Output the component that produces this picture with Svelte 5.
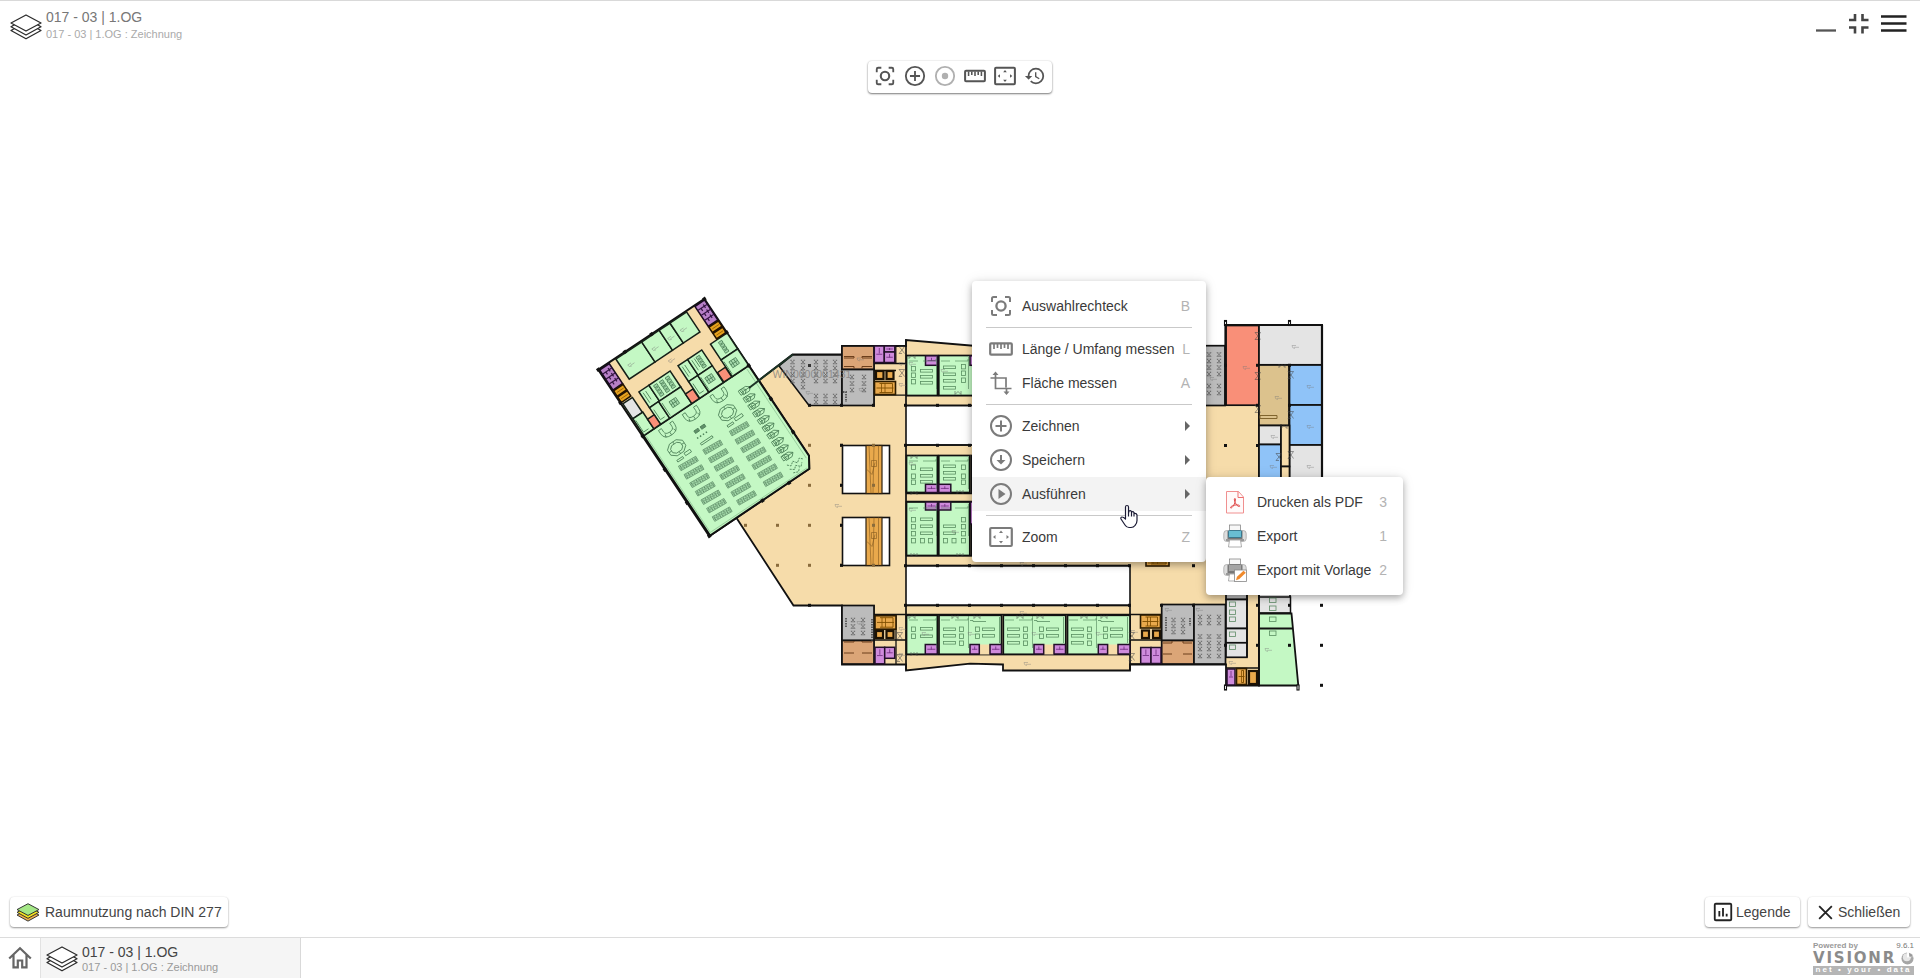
<script>
  const C = { tan: '#f6dcaa', green: '#c4f8c4', gray: '#bcbcbc', light: '#e4e4e4', blue: '#8fc3f8', red: '#f98f78', brown: '#dba577', orange: '#e9a94c', purple: '#cf8bdc', ochre: '#dcc28d', amber: '#e6a21f' };

  // Upright rooms: x, y, width, height, colour
  const rooms = [
    [842, 346, 32, 23.5, C.brown], [842, 369.5, 32, 36, C.gray],
    [842, 605.5, 32, 35, C.gray], [842, 640.5, 32, 23.5, C.brown],
    [906.5, 355.5, 31, 40, C.green], [938.8, 355.5, 40, 40, C.green],
    [906.5, 455.5, 31, 37, C.green], [938.8, 455.5, 31, 37, C.green], [971.3, 455.5, 20, 37, C.green],
    [906.5, 502, 31, 53.5, C.green], [938.8, 502, 31, 53.5, C.green], [971.3, 502, 20, 53.5, C.green],
    [906.5, 615.3, 31, 39, C.green], [939, 615.3, 62.5, 39, C.green], [1003.3, 615.3, 62.5, 39, C.green], [1067.5, 615.3, 62.5, 39, C.green],
    [1161.7, 604.5, 32.3, 36, C.gray], [1161.7, 640.5, 32.3, 23.5, C.brown], [1194, 604.5, 31.5, 59.5, C.gray],
    [1200, 345.7, 25, 59.8, C.gray],
    [1226, 325.5, 33, 79.7, C.red], [1259, 325, 63, 39.8, C.light],
    [1259, 365, 30, 60.5, C.ochre], [1289.5, 365, 32.5, 40, C.blue], [1289.5, 405, 32.5, 40, C.blue],
    [1289.5, 445, 32.5, 50, C.light], [1259, 425.5, 22, 19, C.light], [1259, 444.5, 22, 45, C.blue],
    [1281, 425.5, 8.5, 41, C.tan], [1281, 466.5, 8.5, 30, C.tan],
    [1226, 585, 21, 14.5, C.gray], [1226, 599.5, 21, 29, C.light], [1226, 628.5, 21, 14.3, C.light], [1226, 642.8, 21, 14.5, C.light]
  ];
  const purple = [
    [874.3, 346, 10, 16.5], [884.3, 346, 10.5, 6], [884.3, 352, 10.5, 10.5],
    [925.5, 355.8, 12, 9.5], [970, 355.8, 10, 9.5],
    [925.5, 484.3, 12, 8.2], [938.8, 484.3, 12, 8.2], [925.5, 502, 12, 8], [938.8, 502, 12, 8], [970.3, 502, 6, 22],
    [925.3, 644.5, 12, 9.5], [970, 644.5, 9.3, 9.5], [990, 644.5, 11.5, 9.5], [1034, 644.5, 9.7, 9.5], [1054, 644.5, 11.5, 9.5], [1098.3, 644.5, 9.3, 9.5], [1118, 644.5, 12, 9.5],
    [875, 647.3, 9.7, 16.5], [884.7, 647.3, 10, 11],
    [1140.7, 647.5, 10.3, 16], [1151, 647.5, 10, 16],
    [1227, 669, 8, 16]
  ];
  const lifts = [[876, 371, 7.5, 8], [886.5, 371, 7, 8], [876, 631, 7, 7], [886.5, 631, 7, 7], [1142, 630.5, 7, 7.5], [1153, 630.5, 7, 7.5], [1249, 671, 8, 13]];
  const stairs = [[874.5, 381.5, 21, 13], [875, 615.7, 21, 13.5], [1140.5, 615, 20, 13], [1236.5, 668.5, 10, 16], [1146, 560, 23, 6]];

  const range = (n) => Array.from({ length: n }, (_, i) => i);

  // Columns of the main hall
  const posts = [];
  for (const y of [445.3, 485.3]) for (const x of [809.5, 841.5, 873.5]) posts.push([x, y]);
  for (const y of [525.3, 565.3]) for (const x of [745.5, 777.5, 809.5, 841.5, 873.5]) if (!(y > 560 && x < 760)) posts.push([x, y]);
  const darkPosts = [[809.5, 405.3], [841.5, 405.3], [873.5, 405.3], [809.5, 605.3], [841.5, 445.3], [841.5, 485.3], [841.5, 525.3], [841.5, 565.3], [1225.5, 445.5], [1257.5, 445.5], [1257.5, 405.3], [1257.5, 365.3], [1225.5, 365.3], [1289.5, 365.3], [1289.5, 405.3], [1321.5, 605.3], [1321.5, 645.3], [1321.5, 685.3], [1289.5, 645.3], [1257.5, 645.3], [1257.5, 605.3], [1289.5, 605.3], [1161.5, 605.3], [1193.5, 605.3], [1225.5, 645.3], [1193.5, 565.7]];
  for (const x of [905.5, 937.5, 969.5]) for (const y of [405.3, 445.3, 565.7]) darkPosts.push([x, y]);
  for (const x of [1001.5, 1033.5, 1065.5, 1097.5, 1129.5]) darkPosts.push([x, 565.7]);
  for (const x of [905.5, 937.5, 969.5, 1001.5, 1033.5, 1065.5, 1097.5, 1129.5]) darkPosts.push([x, 605.3]);

  // Chair groups
  const seats = [];
  const addSeats = (xs, ys) => { for (const x of xs) for (const y of ys) seats.push([x, y]); };
  addSeats([792.5, 803], [362, 368, 374.5, 381]);
  addSeats([816, 825.5, 835], [362, 368, 374.5, 381, 396, 402]);
  seats.push([803, 387]);
  addSeats([852, 864], [377, 383.5, 390]);
  addSeats([853, 863], [620, 626.5, 633]);
  addSeats([1173.5, 1183], [620, 626, 632]);
  addSeats([1200, 1209, 1219], [617, 623, 636.5, 643, 649, 656]);
  addSeats([1209, 1219], [354.5, 361, 367.5, 374, 386, 393]);

  // Desks and tables: x, y, width, height
  const desks = [];
  const wide = (x, ys) => ys.forEach((y) => desks.push([x, y, 12, 2.6]));
  const small = (x, ys) => ys.forEach((y) => desks.push([x, y, 4, 4.4]));
  wide(920.5, [369.5, 375.5, 381.5]); small(911.5, [366.5, 373, 379.5]);
  wide(943.5, [366, 373, 379.5, 386.5]); small(961.5, [364.5, 371, 378]);
  wide(920.5, [468, 474.5, 480.5]); small(911.5, [465, 474, 480]);
  wide(943.5, [465, 471.5, 477.5]); small(961.5, [465, 474, 480]);
  wide(920.5, [518, 525, 532]); small(911.5, [517.5, 524.5, 531.5, 538.5]); small(920.5, [538.5]); small(928.5, [538.5]);
  wide(943.5, [525, 532]); small(961.5, [517.5, 524.5, 531.5, 538.5]); small(943.5, [538.5]); small(952, [538.5]);
  wide(920.5, [627.5, 635]); small(911.5, [627, 634]);
  for (const bx of [939, 1003, 1067]) {
    wide(bx + 4.5, [628, 634.5, 641.5]); small(bx + 20.5, [627, 634, 641]);
    small(bx + 36.5, [627, 634]); wide(bx + 43.5, [628, 634.5]);
  }
  for (const y of [602, 610, 617, 632, 645]) desks.push([1229.5, y, 6, 4.5]);
  for (const y of [598, 606, 617, 631]) desks.push([1269.5, y, 6.5, 4.5]);

  const doors = [[912, 355], [912, 615], [955, 615], [977, 615], [1020, 615], [1040, 615], [1084, 615], [1104, 615], [914, 455], [914, 553], [960, 553], [958, 391], [960, 490], [914, 491], [914, 652], [1282, 364], [1284, 425]];
  const sideDoors = [[1258, 336], [1258, 376], [1258, 409], [1291, 375], [1291, 415], [1291, 455], [1279, 457], [902, 350], [902, 373], [900, 636], [900, 658], [1132, 636], [1132, 657]];
  const labels = [[860, 359.5], [862, 390], [809, 393], [902, 364], [902, 385], [912, 364], [944, 371], [912, 464], [912, 510], [955, 532], [838, 506], [1246, 368], [1295, 347], [1278, 398], [1310, 387], [1310, 427], [1310, 467], [1274, 437], [1273, 467], [971, 634], [1035, 634], [1099, 634], [925, 634], [860, 623], [1023, 613], [1027, 664], [1023, 564], [1168, 610], [1199, 610], [1232, 663], [1268, 650], [1213, 379], [902, 629], [902, 655], [1134, 632]];

  // Rotated library wing, in its own axes
  const wing = [
    [20.5, 1, 31, 24, C.green], [51.5, 1, 21, 24, C.green], [72.5, 1, 13, 24, C.green], [85.5, 1, 20, 24, C.green],
    [1.5, 42, 11.5, 18, C.light], [1.5, 60, 12, 20, C.green],
    [21.5, 41, 12, 19, C.green], [33.5, 41, 25.5, 19, C.green], [21.5, 60, 11, 20, C.green], [32.5, 60, 26.5, 20, C.green],
    [68.5, 41, 11.5, 19, C.green], [80, 41, 17, 19, C.green], [68.5, 60, 11, 20, C.green], [79.5, 60, 17.5, 20, C.green],
    [107.5, 41, 20, 19, C.green], [107.5, 60, 20, 20, C.green],
    [13.5, 68.5, 8, 11.5, C.red], [59, 68.5, 9, 11.5, C.red], [97.5, 68.5, 9.5, 11.5, C.red]
  ];
  const shelves = [];
  [[22.9, 128], [52.2, 128], [84.6, 127.3]].forEach(([x, y]) => range(7).forEach((i) => shelves.push([x, y + i * 10.15])));

  const menu = [
    { icon: 'select', label: 'Auswahlrechteck', key: 'B' }, null,
    { icon: 'ruler', label: 'Länge / Umfang messen', key: 'L' },
    { icon: 'area', label: 'Fläche messen', key: 'A' }, null,
    { icon: 'plus', label: 'Zeichnen', sub: true },
    { icon: 'down', label: 'Speichern', sub: true },
    { icon: 'play', label: 'Ausführen', sub: true, active: true }, null,
    { icon: 'zoom', label: 'Zoom', key: 'Z' }
  ];
  const submenu = [
    { icon: 'pdf', label: 'Drucken als PDF', key: '3' },
    { icon: 'printer', label: 'Export', key: '1' },
    { icon: 'template', label: 'Export mit Vorlage', key: '2' }
  ];
  const tools = ['select', 'plus', 'dot', 'ruler', 'zoom', 'history'];
</script>

{#snippet icon(name)}
  <svg class="icon {name}" viewBox="0 0 24 24" fill="none" stroke="currentColor" stroke-width="2">
    {#if name === 'select'}
      <circle cx="12" cy="12" r="4.600" stroke-width="2.300" />
      <path d="M3 8V4.500Q3 3 4.500 3H8M16 3h3.500Q21 3 21 4.500V8M21 16v3.500q0 1.500-1.500 1.500H16M8 21H4.500Q3 21 3 19.500V16" />
    {:else if name === 'plus'}
      <circle cx="12" cy="12" r="10" /><path d="M12 6.500v11M6.500 12h11" />
    {:else if name === 'down'}
      <circle cx="12" cy="12" r="10" /><path d="M12 7v6" /><path d="M7.500 12h9L12 16.500z" fill="currentColor" stroke="none" />
    {:else if name === 'play'}
      <circle cx="12" cy="12" r="10" /><path d="M9.500 7v10l7-5z" fill="currentColor" stroke="none" />
    {:else if name === 'dot'}
      <circle cx="12" cy="12" r="10" /><circle cx="12" cy="12" r="3.500" fill="currentColor" stroke="none" />
    {:else if name === 'ruler'}
      <rect x="1.200" y="6.300" width="21.600" height="11.400" rx="1" stroke-width="2.200" /><path d="M5 7v5M8.500 7v4M12 7v5M15.500 7v4M19 7v5" stroke-width="1.700" />
    {:else if name === 'zoom'}
      <rect x="1.200" y="3" width="21.600" height="18" rx="1" stroke-width="2.200" /><path d="M12 5.500l-2 2.500h4zM12 18.500l-2-2.500h4zM4 12l2.500-2v4zM20 12l-2.500-2v4z" fill="currentColor" stroke="none" />
    {:else if name === 'history'}
      <path d="M13 3a9 9 0 0 0-9 9H1l3.890 3.890.070.140L9 12H6c0-3.870 3.130-7 7-7s7 3.130 7 7-3.130 7-7 7c-1.930 0-3.680-.790-4.940-2.060l-1.420 1.420A8.950 8.950 0 0 0 13 21a9 9 0 0 0 0-18zm-1 5v5l4.280 2.540.720-1.210-3.500-2.080V8H12z" fill="currentColor" stroke="none" />
    {:else if name === 'area'}
      <path d="M1.500 7H17v9.500M6.500 3v14.500h16M17.500 17.500V21" stroke-width="1.700" /><path d="M3.500 4h6l-3-3.500zM14.500 20.500h6l-3 3.500z" fill="currentColor" stroke="none" />
    {:else if name === 'pdf'}
      <path d="M3.500 1.500h12l5 5.500v16h-17z" fill="#fffafa" stroke="#f09090" stroke-width="1" /><path d="M15 1.500V7.500h5.500" stroke="#ee7070" stroke-width="1" />
      <path d="M12 8.500c-1 0-.8 2 .2 4 1 2.300 2.600 4 4 4 1.200 0 .8-1.600-2-1.600-3 0-6.700 1.300-6.700 2.600 0 1.300 2 .2 3.300-2.400C12 13 13 8.500 12 8.500z" stroke="#e04848" stroke-width="1" />
    {:else if name === 'printer' || name === 'template'}
      <rect x="6.500" y="1" width="11" height="8" fill="#f7f7f7" stroke="#888" stroke-width=".8" />
      <rect x=".8" y="6.500" width="22.400" height="11" rx="3" fill="#dedede" stroke="#aaa" stroke-width=".8" />
      <path d="M4.500 7h15v8h-15z" fill="#777" stroke="none" />
      <rect x="5.500" y="6.500" width="13" height="7" rx="1" fill={name === 'printer' ? '#69bdd2' : '#a5a5a5'} stroke={name === 'printer' ? '#34738a' : '#777'} stroke-width=".9" />
      <path d="M3 15h18v2H3z" fill="#999" stroke="none" /><path d="M6.500 16h11l1 7h-13z" fill="#fff" stroke="#999" stroke-width=".8" />
      {#if name === 'template'}
        <rect x="11.500" y="12" width="12" height="11.500" fill="#fff" stroke="#888" stroke-width=".8" /><path d="M13 22.200l1-3.500 6.500-6 2.300 2-6.500 6.300z" fill="#f08a2c" stroke="none" />
      {/if}
    {:else if name === 'chart'}
      <rect x="3" y="3" width="18" height="18" rx="1.200" /><path d="M8 17v-6M12 17V7.500M16 17v-3" />
    {:else if name === 'close'}
      <path d="M4 4l16 16M20 4L4 20" stroke-width="2.300" />
    {:else if name === 'home'}
      <path d="M1.200 12.500L12 2.300l10.800 10.200M5.500 9v12.300h4.300v-6.800h4.400v6.800h4.300V9" stroke-width="2.200" />
    {/if}
  </svg>
{/snippet}

{#snippet layers(fills)}
  <svg class="layers" viewBox="0 0 32 26" stroke="#2c2c2c" stroke-width="1.300" stroke-linejoin="round">
    <path d="M1 16.500L16 8l15 8.500L16 24.800z" fill={fills[2]} />
    <path d="M1 12.800L16 4l15 8.800L16 21z" fill={fills[1]} />
    <path d="M1 9L16 1l15 8L16 17z" fill={fills[0]} />
  </svg>
{/snippet}

{#snippet entry(item)}
  {#if item}
    <li class="entry" class:active={item.active}>
      <span class="glyph">{@render icon(item.icon)}</span>
      <span class="label">{item.label}</span>
      {#if item.sub}<i class="arrow"></i>{:else}<kbd>{item.key}</kbd>{/if}
    </li>
  {:else}
    <li class="rule"></li>
  {/if}
{/snippet}

<div class="page">
  <main>
    <svg class="plan" viewBox="0 0 1920 978">
      <defs>
        <g id="seat" stroke="#555" stroke-opacity=".75" stroke-width=".8" fill="none"><path d="M-1.800-1.800L1.800 1.800M1.800-1.800L-1.800 1.800M-2.200-1.800h1.600M.6-1.800h1.600M-2.200 1.800h4.400" /></g>
        <g id="shelf"><rect x="-10" y="-2.600" width="20" height="5.200" fill="#a2d8a8" stroke="#628f6a" stroke-width=".7" /><path d="M-10 0H10" stroke="#5f8c67" stroke-width=".6" /><path d="M-9-1.300H10M-9 1.400H10" stroke="#5f8c67" stroke-width="1.200" stroke-dasharray="1.200 1.600" /></g>
        <g id="mark" stroke="#777" stroke-opacity=".55" stroke-width=".7" fill="none"><path d="M-3-1.500H1M-3-1.500Q-3 1.500 0 1.500M-1 .3H4" /></g>
      </defs>

      <path d="M749 388L792.500 354.500H842V346H906V340L1000 348H1225.500V405H1259V685.500H1226V664.500H1130V670.500H1003V664.500L970 663.700 906 670.500V664.500H842V605.500H793.500L730 508z" fill={C.tan} stroke="#111" stroke-width="1.800" />
      <g fill="#fff" stroke="#111" stroke-width="1.600">
        <rect x="906" y="405.500" width="224" height="39.500" /><rect x="906" y="565.700" width="224" height="39.600" />
        <rect x="842.500" y="445.500" width="47" height="48" /><rect x="842.500" y="517.500" width="47" height="48" />
      </g>
      {#each [445.5, 517.5] as y}
        <rect x="866" {y} width="16" height="48" fill={C.orange} stroke="#2c2010" stroke-width="1.200" />
        <path d="M869 {y}l2 48M874 {y}l-1 48M878.500 {y}v48M867 {y + 24}l5 5 3-12M871.500 {y + 15}h5v6h-5z" fill="none" stroke="#845b20" stroke-opacity=".75" stroke-width=".8" />
      {/each}
      <path d="M779 366L792.500 355H842V405.500H809z" fill={C.gray} stroke="#111" stroke-width="1.600" />

      <g fill="none" stroke="#111" stroke-width="1.700">
        <path d="M906 339.500V405M906 445V565M906 605V670M906 395.500h80M906 405.500h80M906 445h80M906 493.500h80M906 501.500h80M906 555.700h80M906 565.700h224M906 605.300h224M906 614.500h224M906 654.500h224M1130 605v65" />
        <path d="M874 346v59M874 605v59M895.800 346v17M874 363.500h32M874 395.200h32M874 614.500h32M874 640h32M896 615v49M874 370.500h22M1130 614.500h31M1130 640h31M1130 664h32" stroke-width="1.300" />
      </g>

      {#each rooms as [x, y, width, height, fill]}
        <rect {x} {y} {width} {height} {fill} stroke="#111" stroke-width="1.700" />
      {/each}
      <path d="M1259 597h31.500V613H1259z" fill={C.light} stroke="#111" stroke-width="1.500" />
      <path d="M1259 613.500h32.500l6.800 72H1259zM1259 628.500h33.500" fill={C.green} stroke="#111" stroke-width="1.800" />
      <path d="M1259 495V686M1247 585v72M1290 585v12M1226 668h33" fill="none" stroke="#111" stroke-width="1.600" />
      <g fill="#fff" stroke="#111" stroke-width="1.100">
        <rect x="1224.500" y="320.500" width="2" height="5" /><rect x="1288.500" y="320.500" width="2" height="5" /><rect x="1224.500" y="685" width="2" height="5" /><rect x="1297" y="685" width="2" height="5" />
      </g>
      <path d="M1225.500 325v80M1224.500 325H1323M1322 325V490" stroke="#111" stroke-width="2.200" fill="none" />

      {#each [[979.5, 990], [1043.8, 1054], [1107.8, 1118]] as [a, b]}
        <rect x={a} y="644.500" width={b - a} height="10" fill={C.tan} />
      {/each}
      {#each purple as [x, y, width, height]}
        <rect {x} {y} {width} {height} fill={C.purple} stroke="#23102a" stroke-width="1.500" />
        <path d="M{x + 2} {y + height / 2}h{width - 4}M{x + width / 2} {y + 2}v{height / 3}" stroke="#6d2b7c" stroke-width=".8" />
      {/each}
      {#each stairs as [x, y, width, height]}
        <rect {x} {y} {width} {height} fill={C.orange} stroke="#2c1c00" stroke-width="1.600" />
        <path d="M{x + 2} {y + height / 2}h{width - 4}M{x + 5} {y + 2}h{width - 8}v{height - 4}h{8 - width}" fill="none" stroke="#7d4e00" stroke-width=".9" />
        <path d="M{x + 7} {y + 2}v{height - 4}M{x + width / 2} {y + 2}v{height - 4}" stroke="#7d4e00" stroke-width=".8" />
      {/each}
      {#each lifts as [x, y, width, height]}
        <rect {x} {y} {width} {height} fill={C.orange} stroke="#1c1204" stroke-width="2.200" />
      {/each}

      <g stroke="#6c3f1c" stroke-width="1" fill="none">
        <path d="M844 356.500h10v1.500h-10M872 356.500h-10v1.500h10M844 366.500h10v2M872 366.500h-10v2M844 642h10v-1M872 642h-10v-1M844 653h10M872 653h-10M1163 643h9v-2M1192 643h-9v-2M1163 654h9M1192 654h-9" />
        <path d="M1260 415.500h17v3h-17z" stroke="#80642e" />
        <path d="M843 392h3v10M872 619v22M846 618v10M1166 617v14M1190 618v8" stroke="#555" stroke-dasharray="1.500 1" stroke-width="1.800" />
      </g>

      {#each seats as [x, y]}<use href="#seat" {x} {y} />{/each}
      <g fill="none" stroke="#467b50" stroke-width=".8" stroke-opacity=".85">
        {#each desks as [x, y, width, height]}<rect {x} {y} {width} {height} />{/each}
        {#each [[909, 458], [941, 458], [909, 505], [941, 505], [941, 617], [1005, 617], [1069, 617], [909, 617], [909, 358], [941, 358]] as [x, y]}
          <path d="M{x} {y + 3}h9M{x + 14} {y + 3}h13v-2M{x + 27.500} {y - 1}v32" stroke-opacity=".7" />
        {/each}
        {#each [970, 1034, 1098] as x}<path d="M{x} 620.500h3v1h13M{x + 29.500} 617v26" />{/each}
      </g>
      <g fill="none" stroke="#444" stroke-opacity=".65" stroke-width=".8">
        {#each doors as [x, y]}<path d="M{x - 3} {y}v3.500l3-3 3 3v-3.500" />{/each}
        {#each sideDoors as [x, y]}<path d="M{x} {y - 3.5}h-3l3 3.500-3 3.500h3M{x} {y - 3.5}h2.500l-2.500 3.500 2.500 3.500" />{/each}
      </g>
      {#each labels as [x, y]}<use href="#mark" {x} {y} />{/each}
      {#each posts as [x, y]}<rect x={x - 1.500} y={y - 1.500} width="3" height="3" fill="#8a6c3c" />{/each}
      {#each darkPosts as [x, y]}<rect x={x - 1.500} y={y - 1.500} width="3" height="3" fill="#111" />{/each}
      <rect x="808" y="364" width="3" height="3" fill="#333" />

      <g transform="translate(598.300 369.700) rotate(-33.700)">
        <path d="M0 0H127.500V188.500L120.500 199.500 0 200z" fill={C.tan} stroke="#111" stroke-width="2" />
        <path d="M1 80H127.500V188.500L120.500 199.500 1 200z" fill={C.green} stroke="#111" stroke-width="2" />
        {#each wing as [x, y, width, height, fill]}<rect {x} {y} {width} {height} {fill} stroke="#152018" stroke-width="1.500" />{/each}
        {#each [1, 115.5] as x}
          <rect {x} y="1" width="11.500" height="24" fill="#b880c8" stroke="#190c20" stroke-width="1.500" />
          {#each [6, 12, 18] as y}<path d="M{x} {y}h11.500M{x + 4} {y}v3M{x + 8} {y - 2}v4" stroke="#351544" stroke-width="1.200" />{/each}
          {#each [26, 33.5] as y}<rect {x} {y} width="11.500" height="6.500" fill={C.amber} stroke="#231300" stroke-width="1.500" /><path d="M{x + 2} {y + 3.300}h8" stroke="#8a5600" stroke-width=".7" />{/each}
        {/each}
        <g fill="none" stroke="#4c8057" stroke-width=".8">
          {#each [37, 44, 51, 88, 115] as x}
            {#each [44, 47.5, 51, 54.5] as y}<rect {x} {y} width="4" height="2.500" fill="#9fd3a6" />{/each}
          {/each}
          {#each [24.5, 71.5, 83] as x}<path d="M{x} 44v12M{x + 3} 44v10" />{/each}
          {#each [45, 88, 117] as x}
            <rect x={x - 4} y="66" width="8" height="7" fill="#a8dcae" /><path d="M{x - 4} 69.500h8M{x - 1.500} 66v7M{x + 1.500} 66v7" />
          {/each}
          <path d="M3 63v14h6M24 64v12h5M71 64v12h5M34.500 63v15M81 63v15M109 63v15" />
          {#each [24.8, 53.4, 86.6] as x}
            <path d="M{x - 8.500} 84v4q0 7 8.500 7t8.500-7v-4h-3.500v4q0 3.500-5 3.500t-5-3.500v-4z" /><path d="M{x - 5} 91l-1 3M{x + 5} 91l1 3M{x} 91.500v3.500" />
          {/each}
          {#each [[21.9, 108.4], [83.7, 107.5]] as [x, y]}
            <path d="M{x - 9} {y - 3}l5-4h8l5 4v6l-5 4h-8l-5-4zM{x - 6} {y - 2}l3-2.500h6l3 2.500v4l-3 2.500h-6l-3-2.500z" /><path d="M{x} {y - 7}v2.500M{x} {y + 4.500}v2.500M{x - 9} {y}h3M{x + 6} {y}h3" />
          {/each}
          <path d="M15 119h7v2h-7zM25 117h7v3h-7zM76 118h7v2h-7zM86 116h9v3h-9zM44 118h14v2H44z" />
          <path d="M45.500 104h5v3h-5zM53 104h5v3h-5z" fill="#628f6a" />
          <path d="M44 112h14" stroke-dasharray="1.500 2" stroke-width="1.500" />
          {#each range(10) as i}
            <g transform="translate({111 - i * 0.1} {98.500 + i * 8.700})"><path d="M-5-3H2l4 3-3 3h-7zM-2-3l3 3-3 3M-5 0H6" /><rect x="-6.500" y="-3" width="3.500" height="5" /></g>
          {/each}
          <path d="M104 184l3 3 4-3 3 4 4-3 3 3M104 189l4 3 3-3 4 4 3-3M105 194l5 2 3-3" stroke-dasharray="2 1" />
          <path d="M3 82v116M4 197.500H119M124 82v107" stroke-opacity=".55" stroke-width=".6" />
        </g>
        {#each shelves as [x, y]}<use href="#shelf" transform="translate({x} {y}) rotate(4)" />{/each}
        {#each [[30, 14], [59, 14], [78, 14], [93, 14], [66, 33]] as [x, y]}<use href="#mark" {x} {y} />{/each}
        {#each [[0, 0], [32, 0], [64, 0], [127.5, 0], [0, 40], [0, 80], [0, 120], [0, 160], [0, 200], [127.5, 40], [127.5, 80], [127.5, 120], [127.5, 160], [64, 200], [96, 200]] as [x, y]}<rect x={x - 1.700} y={y - 1.700} width="3.400" height="3.400" fill="#111" />{/each}
      </g>
      <path d="M749 388L793 354.500" stroke="#1d3326" stroke-width="2" />
      <text x="772.500" y="377.500">WIN0000001431</text>
    </svg>

    <header>
      <div class="doc">
        {@render layers(['#fff', '#fff', '#fff'])}
        <div class="names"><strong>017 - 03 | 1.OG</strong><small>017 - 03 | 1.OG : Zeichnung</small></div>
      </div>
      <svg class="window" viewBox="0 0 92 20">
        <path d="M0 16.500h20" stroke="#555" stroke-width="2.300" />
        <path d="M33 6h6V0M52.500 6h-6V0M33 13.500h6v6M52.500 13.500h-6v6" fill="none" stroke="#444" stroke-width="2.600" />
        <path d="M65 2.500h25.500M65 9.500h25.500M65 16.500h25.500" stroke="#222" stroke-width="2.700" />
      </svg>
    </header>

    <div class="toolbar">
      {#each tools as tool}<button>{@render icon(tool)}</button>{/each}
    </div>

    <div class="actions">
      <button class="usage">{@render layers(['#a5e887', '#f3e31c', '#eeb04c'])}Raumnutzung nach DIN 277</button>
      <button class="legend">{@render icon('chart')}Legende</button>
      <button class="shut">{@render icon('close')}Schließen</button>
    </div>
  </main>

  <footer>
    <div class="home">{@render icon('home')}</div>
    <div class="tab">
      {@render layers(['#fff', '#fff', '#fff'])}
      <div class="names"><strong>017 - 03 | 1.OG</strong><small>017 - 03 | 1.OG : Zeichnung</small></div>
    </div>
    <div class="brand">
      <div class="top"><b>Powered by</b><span>9.6.1</span></div>
      <div class="logo"><span>VISIONR</span>
        <svg viewBox="0 0 14 14"><circle cx="7" cy="7" r="6.500" fill="#a6a6a6" /><circle cx="6.300" cy="5.600" r="4.300" fill="#e6e6e6" /><path d="M6.500 0v6l6.500-.500A6.500 6.500 0 0 0 6.500 0z" fill="#fff" /><path d="M8.500.800a6 6 0 0 1 4.500 4.200L9 5z" fill="#999" /></svg>
      </div>
      <div class="motto">net • your • data</div>
    </div>
  </footer>

  <ul class="menu primary">{#each menu as item}{@render entry(item)}{/each}</ul>
  <ul class="menu secondary">{#each submenu as item}{@render entry(item)}{/each}</ul>
  <svg class="cursor" viewBox="0 0 18 24"><path d="M5.500 14.500V2.500Q5.500 1 7 1T8.500 2.500V9L9 6.500Q10.500 5.500 11.500 7V9.500V7.500Q13 6.500 14 8V10.500V9Q16.500 8.500 17 10.500V16Q17 19 15 21Q13.500 23 11 23H9Q6.500 23 5 20.500L1 14.500Q.500 12.500 2 12.500Q3.500 12.500 5.500 14.500zM8.500 8v4M11.500 9v3M14 10v2" fill="#fff" stroke="#1b1b35" stroke-width="1.200" stroke-linejoin="round" /></svg>
</div>

<style>
  :global(body) { margin: 0; overflow: hidden; }
  .page { position: relative; width: 1920px; height: 978px; display: flex; flex-direction: column; background: #fff; font: 14px/16px "Liberation Sans", Arial, sans-serif; color: #444; }
  main { flex: 1; display: flex; flex-direction: column; border-top: 1px solid #d9d9d9; box-sizing: border-box; }
  .plan { position: absolute; left: 0; top: 0; width: 1920px; height: 978px; pointer-events: none; }
  .plan text { font-size: 10.500px; fill: #7a7a7a; fill-opacity: .75; }
  header { position: relative; display: flex; justify-content: space-between; height: 60px; }
  .doc { display: flex; padding: 6px 0 0 10px; }
  .layers { width: 32px; height: 26px; flex: none; }
  .doc .layers { margin-top: 7px; }
  .names { display: flex; flex-direction: column; margin-left: 4px; }
  strong { font-weight: 400; line-height: 20px; color: #777; }
  small { font-size: 11px; line-height: 14px; color: #aaa; }
  .window { width: 92px; height: 20px; margin: 13px 12px 0 0; }
  button { font: inherit; color: inherit; border: 0; background: none; padding: 0; display: flex; align-items: center; }
  .icon { width: 22px; height: 22px; flex: none; display: block; }
  .toolbar { position: relative; align-self: center; display: flex; justify-content: center; gap: 8px; box-sizing: border-box; width: 184px; height: 32px; padding-bottom: 2px; background: #fff; border-radius: 4px; box-shadow: 0 1px 2px rgba(0,0,0,.5), 0 0 2px rgba(0,0,0,.12); color: #555; }
  .toolbar button { width: 22px; justify-content: center; }
  .actions { position: relative; display: flex; align-items: center; gap: 8px; margin-top: auto; padding: 0 10px 10px; }
  .toolbar :global(.dot) { color: #b0b0b0; }
  .actions button { box-sizing: border-box; height: 30px; background: #fff; border-radius: 4px; box-shadow: 0 1px 2px rgba(0,0,0,.4), 0 0 2px rgba(0,0,0,.08); white-space: nowrap; }
  .usage { width: 218px; padding-left: 6px; gap: 5px; margin-right: auto; }
  .usage .layers { width: 24px; height: 19px; }
  .legend { width: 95px; padding-left: 7px; gap: 2px; }
  .shut { width: 102px; padding-left: 8px; gap: 3px; }
  .actions .icon { color: #222; }
  .shut .icon { width: 19px; height: 19px; }
  footer { position: relative; box-sizing: border-box; height: 41px; border-top: 1px solid #dcdcdc; display: flex; background: #fff; }
  .home { width: 40px; display: flex; justify-content: center; align-items: center; color: #666; box-sizing: border-box; }
  .home .icon { width: 24px; height: 24px; }
  .tab { box-sizing: border-box; width: 261px; padding-left: 5px; display: flex; background: #f5f5f5; border-right: 1px solid #d9d9d9; border-left: 1px solid #e2e2e2; }
  .tab .layers { margin-top: 8px; }
  .tab strong { color: #444; line-height: 20px; padding-top: 4px; height: 17px; }
  .tab small { color: #999; line-height: 16px; }
  .brand { width: 101px; margin: 3px 6px 0 auto; color: #777; }
  .top { display: flex; justify-content: space-between; font-size: 8px; line-height: 10px; }
  .top b { color: #999; }
  .logo { display: flex; justify-content: space-between; align-items: center; height: 15px; }
  .logo span { font: 700 15px/15px "DejaVu Sans", sans-serif; color: #8b8b8b; letter-spacing: 1.800px; }
  .logo svg { width: 13px; height: 13px; flex: none; }
  .motto { height: 9px; background: #b5b5b5; color: #fff; font: 700 8px/8px "Liberation Sans", sans-serif; letter-spacing: 2.100px; text-align: center; white-space: nowrap; }
  .menu { position: absolute; margin: 0; padding: 8px 0; list-style: none; background: #fff; border-radius: 4px; box-shadow: 0 3px 7px rgba(0,0,0,.3), 0 0 14px rgba(0,0,0,.08); }
  .primary { left: 972px; top: 281px; width: 234px; }
  .secondary { left: 1206px; top: 477px; width: 197px; }
  .entry { height: 34px; display: flex; align-items: center; padding: 0 16px; }
  .active { background: #f3f3f3; }
  .glyph { width: 26px; margin-right: 8px; display: flex; justify-content: center; color: #7b7b7b; }
  .secondary .glyph { margin-right: 9px; }
  .glyph .icon { width: 24px; height: 24px; }
  .label { white-space: nowrap; color: #3a3a3a; }
  kbd { margin-left: auto; font: inherit; color: #b3b3b3; }
  .arrow { margin-left: auto; border: solid transparent; border-width: 5px 0 5px 5px; border-left-color: #666; }
  .rule { height: 1px; margin: 4px 14px; background: #c9c9c9; }
  .cursor { position: absolute; left: 1120px; top: 504px; width: 18px; height: 25px; }
</style>
